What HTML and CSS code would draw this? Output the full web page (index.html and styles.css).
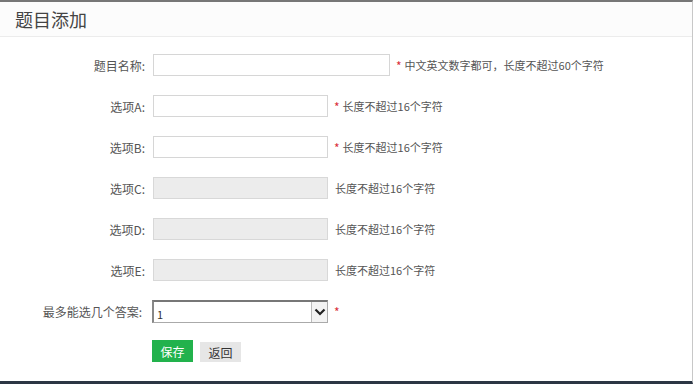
FILE: index.html
```html
<!DOCTYPE html>
<html>
<head>
    <meta charset="utf-8">
    <title>题目添加</title>
    <link rel="stylesheet" href="styles.css">
</head>
<body>
    <div class="page">
        <!-- Title -->
        <div class="header">
            <h2>题目添加</h2>
        </div>

        <!-- Form -->
        <form class="form">
            <div class="row">
                <label>题目名称:</label>
                <input type="text" class="input wide">
                <span class="star">*</span>
                <span class="tip">中文英文数字都可，长度不超过60个字符</span>
            </div>
            <div class="row">
                <label>选项A:</label>
                <input type="text" class="input">
                <span class="star">*</span>
                <span class="tip">长度不超过16个字符</span>
            </div>
            <div class="row">
                <label>选项B:</label>
                <input type="text" class="input">
                <span class="star">*</span>
                <span class="tip">长度不超过16个字符</span>
            </div>
            <div class="row">
                <label>选项C:</label>
                <input type="text" class="input" disabled>
                <span class="tip plain">长度不超过16个字符</span>
            </div>
            <div class="row">
                <label>选项D:</label>
                <input type="text" class="input" disabled>
                <span class="tip plain">长度不超过16个字符</span>
            </div>
            <div class="row">
                <label>选项E:</label>
                <input type="text" class="input" disabled>
                <span class="tip plain">长度不超过16个字符</span>
            </div>
            <div class="row select-row">
                <label>最多能选几个答案:</label>
                <div class="select-box">
                    <select>
                        <option>1</option>
                        <option>2</option>
                        <option>3</option>
                    </select>
                    <span class="arrow">
                        <svg width="12" height="8" viewBox="0 0 12 8"><path d="M1.5 1.5 L6 6 L10.5 1.5" fill="none" stroke="#222" stroke-width="2.2"/></svg>
                    </span>
                </div>
                <span class="star">*</span>
            </div>
            <div class="buttons">
                <button type="button" class="btn save">保存</button>
                <button type="button" class="btn back">返回</button>
            </div>
        </form>
    </div>
</body>
</html>
```

FILE: styles.css
```css
* {
    box-sizing: border-box;
}

body {
    margin: 0;
    font-family: "Noto Sans CJK SC", "Liberation Sans", sans-serif;
    background-color: white;
    color: #555;
}

.page {
    height: 384px;
    border-top: 2px solid #777;
    border-right: 1px solid #c8c8c8;
    border-bottom: 3px solid #2c3644;
}

.header {
    height: 35px;
    padding-left: 15px;
    background-color: #fcfcfc;
    border-bottom: 1px solid #ececec;
}

h2 {
    margin: 0;
    font-size: 18px;
    font-weight: normal;
    line-height: 34px;
    color: #444;
}

.form {
    padding-top: 17px;
}

.row {
    display: flex;
    align-items: center;
    height: 22px;
    margin-bottom: 19px;
    font-size: 11px;
}

.row label {
    width: 146px;
    padding-right: 1px;
    text-align: right;
    font-size: 12px;
    color: #555;
}

.input {
    width: 175px;
    height: 22px;
    margin-left: 7px;
    border: 1px solid #d6d6d6;
    background-color: white;
    font-size: 11px;
}

.input.wide {
    width: 237px;
}

.input:disabled {
    background-color: #ececec;
    border-color: #d8d8d8;
}

.star {
    margin-left: 6px;
    color: #d9303a;
    font-size: 12px;
}

.tip {
    margin-left: 3px;
    color: #555;
}

.tip.plain {
    margin-left: 7px;
}

.select-row {
    height: 23px;
    margin-top: 4px;
    margin-bottom: 17px;
}

.select-row label {
    width: 143px;
}

.select-box {
    position: relative;
    width: 176px;
    height: 23px;
    margin-left: 9px;
}

.select-box select {
    appearance: none;
    width: 100%;
    height: 100%;
    padding: 4px 0 0 3px;
    border: 1px solid #aaa;
    border-top: 2px solid #777;
    border-left: 2px solid #888;
    background-color: white;
    font-family: inherit;
    font-size: 11px;
    color: #333;
}

.arrow {
    position: absolute;
    top: 2px;
    right: 1px;
    width: 16px;
    height: 20px;
    display: flex;
    align-items: center;
    justify-content: center;
    border-left: 1px solid #bbb;
    background-color: #f3f3f3;
}

.buttons {
    display: flex;
    gap: 7px;
    padding-left: 152px;
}

.btn {
    width: 41px;
    height: 22px;
    border: none;
    font-family: inherit;
    font-size: 12px;
    cursor: pointer;
}

.save {
    background-color: #22b24c;
    color: white;
}

.back {
    height: 20px;
    margin-top: 2px;
    background-color: #e6e6e6;
    color: #333;
}
```
